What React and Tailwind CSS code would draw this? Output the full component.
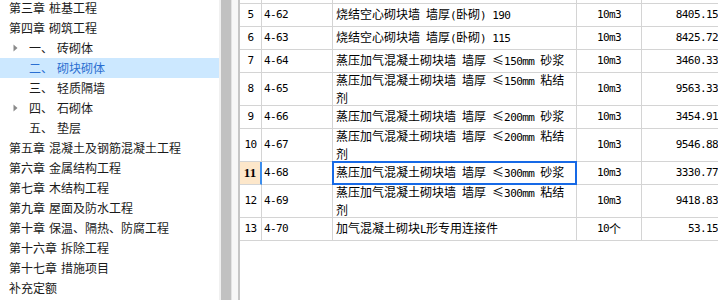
import React from "react";

function T({ s }) {
  const parts = s.split(/([\x20-\x7e]+)/);
  return parts.map((p, i) =>
    /^[\x20-\x7e]+$/.test(p) ? (
      <span key={i} className="font-['DejaVu_Sans_Mono'] text-[11px] tracking-[-0.6px] whitespace-pre">
        {p}
      </span>
    ) : (
      <span key={i}>{p}</span>
    )
  );
}

const tree = [
  { c: "第三章", t: "桩基工程" },
  { c: "第四章", t: "砌筑工程" },
  { n: "一、", t: "砖砌体", arrow: true },
  { n: "二、", t: "砌块砌体", sel: true },
  { n: "三、", t: "轻质隔墙" },
  { n: "四、", t: "石砌体", arrow: true },
  { n: "五、", t: "垫层" },
  { c: "第五章", t: "混凝土及钢筋混凝土工程" },
  { c: "第六章", t: "金属结构工程" },
  { c: "第七章", t: "木结构工程" },
  { c: "第九章", t: "屋面及防水工程" },
  { c: "第十章", t: "保温、隔热、防腐工程" },
  { c: "第十六章", t: "拆除工程" },
  { c: "第十七章", t: "措施项目" },
  { c: "补充定额", t: "" },
];

const rows = [
  { no: "5", code: "4-62", name: ["烧结空心砌块墙 墙厚(卧砌) 190"], unit: "10m3", price: "8405.15" },
  { no: "6", code: "4-63", name: ["烧结空心砌块墙 墙厚(卧砌) 115"], unit: "10m3", price: "8425.72" },
  { no: "7", code: "4-64", name: ["蒸压加气混凝土砌块墙 墙厚 ≤150mm 砂浆"], unit: "10m3", price: "3460.33" },
  { no: "8", code: "4-65", name: ["蒸压加气混凝土砌块墙 墙厚 ≤150mm 粘结", "剂"], unit: "10m3", price: "9563.33" },
  { no: "9", code: "4-66", name: ["蒸压加气混凝土砌块墙 墙厚 ≤200mm 砂浆"], unit: "10m3", price: "3454.91" },
  { no: "10", code: "4-67", name: ["蒸压加气混凝土砌块墙 墙厚 ≤200mm 粘结", "剂"], unit: "10m3", price: "9546.88" },
  { no: "11", code: "4-68", name: ["蒸压加气混凝土砌块墙 墙厚 ≤300mm 砂浆"], unit: "10m3", price: "3330.77", sel: true },
  { no: "12", code: "4-69", name: ["蒸压加气混凝土砌块墙 墙厚 ≤300mm 粘结", "剂"], unit: "10m3", price: "9418.83" },
  { no: "13", code: "4-70", name: ["加气混凝土砌块L形专用连接件"], unit: "10个", price: "53.15" },
];

function Arrow() {
  return (
    <svg width="5" height="8" viewBox="0 0 5 8">
      <path d="M0.5 0.5 L4.5 4 L0.5 7.5 Z" fill="#8a8a8a" />
    </svg>
  );
}

export default function App() {
  return (
    <div className="w-[718px] h-[300px] overflow-hidden flex bg-white">
      {/* tree */}
      <div className="w-[219px] shrink-0 h-full overflow-hidden bg-white font-['Noto_Sans_CJK_SC',sans-serif] text-[12px] text-[#1a1a1a]">
        <div className="-mt-[2px]">
          {tree.map((r, i) =>
            r.c ? (
              <div key={i} className="h-[20px] flex items-center pl-[9px] gap-[4px] whitespace-nowrap">
                <span>{r.c}</span>
                {r.t && <span>{r.t}</span>}
              </div>
            ) : (
              <div
                key={i}
                className={
                  "h-[20px] flex items-center pl-[13px] whitespace-nowrap " +
                  (r.sel ? "bg-[#cce8ff] text-[#2b6fd1]" : "")
                }
              >
                <span className="w-[16px] flex items-center">{r.arrow && <Arrow />}</span>
                <span className="w-[28px]">{r.n}</span>
                <span>{r.t}</span>
              </div>
            )
          )}
        </div>
      </div>
      {/* splitter / scrollbar */}
      <div className="w-[2px] shrink-0 h-full bg-[#f0f0f0]" />
      <div className="w-[10px] shrink-0 h-full bg-[#c1c1c1]" />
      <div className="w-[1px] shrink-0 h-full bg-[#e3e3e3]" />
      <div className="w-[6px] shrink-0 h-full bg-[#f7f7f7]" />
      <div className="w-[2px] shrink-0 h-full bg-[#c6c6c6]" />
      {/* table */}
      <div className="flex-1 h-full overflow-hidden bg-white font-['Noto_Sans_CJK_SC',sans-serif] text-[12px] text-black leading-[16px]">
        <div className="flex h-[4px]">
          <div className="w-[22px] shrink-0 border-r border-b border-[#d4d4d4]" />
          <div className="w-[71px] shrink-0 border-r border-b border-[#d4d4d4]" />
          <div className="w-[244px] shrink-0 border-r border-b border-[#d4d4d4]" />
          <div className="w-[65px] shrink-0 border-r border-b border-[#d4d4d4]" />
          <div className="w-[80px] shrink-0 border-b border-[#d4d4d4]" />
        </div>
        {rows.map((r) => {
          const dbl = r.name.length > 1;
          return (
            <div key={r.no} className={"flex " + (dbl ? "h-[33px]" : "h-[23px]")}>
              <div
                className={
                  "w-[22px] shrink-0 flex items-center justify-center border-b border-[#d4d4d4] " +
                  (r.sel
                    ? "bg-[#fde7ca] border-r-2 border-r-[#3b8ded] font-['Liberation_Serif'] font-bold text-[13px]"
                    : "border-r font-['DejaVu_Sans_Mono'] text-[11px] tracking-[-0.6px]")
                }
              >
                {r.no}
              </div>
              <div className="w-[71px] shrink-0 flex items-center pl-[2px] border-r border-b border-[#d4d4d4]">
                <T s={r.code} />
              </div>
              <div className="w-[244px] shrink-0 relative flex items-center pl-[3px] border-r border-b border-[#d4d4d4] whitespace-nowrap">
                <div>
                  {r.name.map((l, j) => (
                    <div key={j}>
                      <T s={l} />
                    </div>
                  ))}
                </div>
                {r.sel && (
                  <div className="absolute -left-px -top-px right-[-1px] bottom-[-1px] border-2 border-[#1669e6]" />
                )}
              </div>
              <div className="w-[65px] shrink-0 flex items-center justify-center border-r border-b border-[#d4d4d4]">
                <T s={r.unit} />
              </div>
              <div className="w-[80px] shrink-0 flex items-center justify-end pr-[4px] border-b border-[#d4d4d4]">
                <T s={r.price} />
              </div>
            </div>
          );
        })}
      </div>
    </div>
  );
}
